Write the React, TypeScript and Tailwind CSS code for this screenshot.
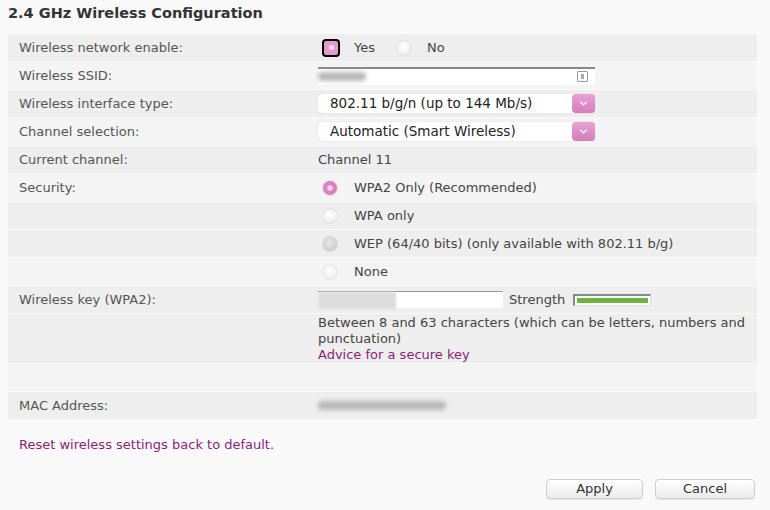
import { ChevronDown } from "lucide-react";

// --- Small form pieces ---
const Radio = ({ checked = false, dim = false }: { checked?: boolean; dim?: boolean }) => (
  <span
    className={`inline-block w-[14px] h-[14px] rounded-full shrink-0 ${
      checked
        ? "bg-[radial-gradient(circle_at_50%_50%,#f6d6ec_0,#f6d6ec_22%,#dc86c4_32%,#d276b8_100%)] shadow-[0_0_2px_rgba(180,80,150,0.5)]"
        : dim
        ? "bg-[radial-gradient(circle_at_45%_40%,#e6e6e6_0,#c4c4c4_100%)] shadow-[0_0_2px_rgba(0,0,0,0.3)]"
        : "bg-[radial-gradient(circle_at_45%_40%,#ffffff_0,#e6e6e6_100%)] shadow-[0_0_2px_rgba(0,0,0,0.22)]"
    }`}
  />
);

const Blur = ({ w }: { w: string }) => (
  <span className={`inline-block h-[9px] ${w} rounded-sm bg-[#b8b8b8] blur-[2px]`} />
);

const Select = ({ text }: { text: string }) => (
  <div className="w-[277px] h-[19px] flex items-center bg-white rounded-[4px] shadow-[0_0_1px_rgba(0,0,0,0.3)]">
    <span className="flex-1 pl-[12px] text-[13.5px] text-[#222] leading-none">{text}</span>
    <span className="w-[23px] h-[19px] rounded-[4px] bg-[linear-gradient(#e6a2d6,#d47dbd)] flex items-center justify-center">
      <ChevronDown size={11} strokeWidth={3} className="text-white" />
    </span>
  </div>
);

type RowProps = { label?: string; shade?: boolean; h?: string; children?: React.ReactNode; top?: boolean };

const Row = ({ label = "", shade = false, h = "h-[28px]", children, top = false }: RowProps) => (
  <div
    className={`flex ${top ? "items-start pt-[6px]" : "items-center"} ${h} border-t border-[#f9f9f9] ${
      shade ? "bg-[#eeeeee]" : "bg-[#f4f4f4]"
    }`}
  >
    <div className="w-[310px] pl-[11px] text-[13px] text-[#555]">{label}</div>
    <div className="flex-1 flex items-center text-[13px] text-[#444]">{children}</div>
  </div>
);

export default function App() {
  return (
    <div
      className="w-[770px] h-[510px] bg-[#f9f9f9] px-[8px] pt-[4px] overflow-hidden"
      style={{ fontFamily: '"DejaVu Sans", Verdana, sans-serif' }}
    >
      <h1 className="text-[14.5px] font-bold text-[#333] leading-[18px] mb-[11px]">2.4 GHz Wireless Configuration</h1>

      <div className="w-[749px]">
        <Row label="Wireless network enable:" shade>
          <span className="ml-[4px] w-[18px] h-[18px] rounded-[4px] border-2 border-black bg-[#e49bd0] flex items-center justify-center">
            <span className="w-[5px] h-[5px] rounded-full bg-[#f8e0f0]" />
          </span>
          <span className="ml-[14px]">Yes</span>
          <span className="ml-[22px] flex"><Radio /></span>
          <span className="ml-[16px]">No</span>
        </Row>

        <Row label="Wireless SSID:">
          <div className="w-[277px] h-[18px] bg-white border-t-2 border-[#888] flex items-center justify-between pr-[7px]">
            <Blur w="w-[48px]" />
            <span className="w-[11px] h-[11px] border border-[#999] rounded-[1px] flex items-center justify-center">
              <span className="w-[3px] h-[5px] bg-[#aaa]" />
            </span>
          </div>
        </Row>

        <Row label="Wireless interface type:" shade>
          <Select text="802.11 b/g/n (up to 144 Mb/s)" />
        </Row>

        <Row label="Channel selection:">
          <Select text="Automatic (Smart Wireless)" />
        </Row>

        <Row label="Current channel:" shade>
          Channel 11
        </Row>

        <Row label="Security:">
          <span className="ml-[5px] flex"><Radio checked /></span>
          <span className="ml-[17px]">WPA2 Only (Recommended)</span>
        </Row>
        <Row shade>
          <span className="ml-[5px] flex"><Radio /></span>
          <span className="ml-[17px]">WPA only</span>
        </Row>
        <Row shade>
          <span className="ml-[5px] flex"><Radio dim /></span>
          <span className="ml-[17px]">WEP (64/40 bits) (only available with 802.11 b/g)</span>
        </Row>
        <Row>
          <span className="ml-[5px] flex"><Radio /></span>
          <span className="ml-[17px]">None</span>
        </Row>

        <Row label="Wireless key (WPA2):" shade>
          <div className="w-[185px] h-[17px] bg-white border-t border-[#999] flex items-center">
            <span className="w-[78px] h-[17px] bg-[#dcdcdc] blur-[1px]" />
          </div>
          <span className="ml-[6px]">Strength</span>
          <span className="ml-[8px] w-[78px] h-[12px] border-t-2 border-l-2 border-[#888] border-r border-b border-r-[#ddd] border-b-[#ddd] bg-white flex items-center px-[2px]">
            <span className="w-full h-[5px] bg-[#6cb33e]" />
          </span>
        </Row>

        <Row shade h="h-[50px]" top>
          <div className="w-[430px] text-[13px] leading-[16px] text-[#444] -mt-[5px]">
            Between 8 and 63 characters (which can be letters, numbers and punctuation)
            <div className="text-[#8a1f78]">Advice for a secure key</div>
          </div>
        </Row>

        <Row h="h-[28px]" />

        <Row label="MAC Address:" shade>
          <Blur w="w-[128px]" />
        </Row>
      </div>

      <div className="mt-[16px] pl-[11px] text-[13px] text-[#8a1f78]">Reset wireless settings back to default.</div>

      <div className="flex justify-end gap-[12px] mt-[24px] pr-[7px]">
        <button className="w-[97px] h-[20px] rounded-[4px] border border-[#cfcfcf] bg-[linear-gradient(#ffffff,#ebebeb)] text-[13px] text-[#333] leading-none shadow-[0_1px_1px_rgba(0,0,0,0.08)]">
          Apply
        </button>
        <button className="w-[100px] h-[20px] rounded-[4px] border border-[#cfcfcf] bg-[linear-gradient(#ffffff,#ebebeb)] text-[13px] text-[#333] leading-none shadow-[0_1px_1px_rgba(0,0,0,0.08)]">
          Cancel
        </button>
      </div>
    </div>
  );
}
